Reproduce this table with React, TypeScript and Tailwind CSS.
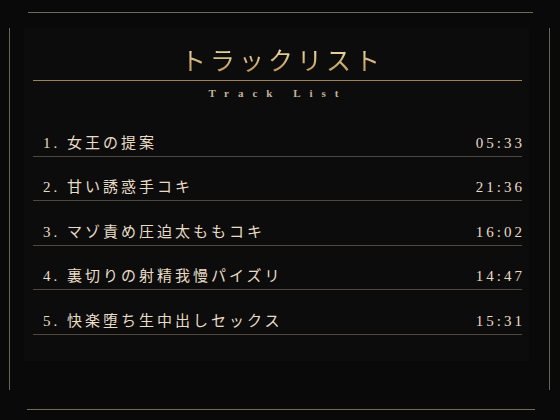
import React from 'react';

interface Track {
  title: string;
  time: string;
}

const tracks: Track[] = [
  { title: '女王の提案', time: '05:33' },
  { title: '甘い誘惑手コキ', time: '21:36' },
  { title: 'マゾ責め圧迫太ももコキ', time: '16:02' },
  { title: '裏切りの射精我慢パイズリ', time: '14:47' },
  { title: '快楽堕ち生中出しセックス', time: '15:31' },
];

const serif = { fontFamily: '"Liberation Serif", "Noto Sans CJK JP", serif' };

export default function App() {
  return (
    <div className="w-[560px] h-[420px] bg-[#0a0909] flex flex-col overflow-hidden" style={serif}>
      {/* top frame line */}
      <div className="h-px mt-[12px] ml-[28px] mr-[27px] bg-[#74685a]" />

      <div className="flex mt-[15px] h-[362px]">
        <div className="w-px ml-[9px] bg-[#6a635a]" />

        <div className="flex-1 pl-[14px] pr-[20px]">
          <div className="h-[333px] bg-[#0d0c0c] pl-[9px] pr-[7px] flex flex-col">
            {/* heading */}
            <div className="pt-[16px] flex justify-center">
              <h1
                className="text-[25px] leading-[30px] font-normal tracking-[4px] pl-[10px] bg-gradient-to-b from-[#f8e7bb] to-[#b8924f] bg-clip-text text-transparent"
                style={{ fontFamily: '"Noto Sans CJK JP", sans-serif' }}
              >
                トラックリスト
              </h1>
            </div>
            <div className="h-px mt-[6px] bg-[#9c8258]" />
            <div className="mt-[5px] text-center text-[11px] leading-[14px] tracking-[9px] pl-[1px] text-[#c2b49c] font-bold">
              Track List
            </div>

            {/* tracks */}
            <div className="mt-[12px] flex flex-col">
              {tracks.map((t, i) => (
                <div
                  key={i}
                  className="h-[44.5px] flex items-end justify-between pb-[3px] pl-[10px] border-b border-[#4d4740]"
                >
                  <span className="text-[15px] leading-[20px] tracking-[3px] text-[#e8dcc6]">
                    {i + 1}.{' '}
                    <span style={{ fontFamily: '"Noto Sans CJK JP", sans-serif' }}>{t.title}</span>
                  </span>
                  <span className="text-[15px] leading-[20px] tracking-[3px] mr-[-3px] text-[#e8dcc6]">
                    {t.time}
                  </span>
                </div>
              ))}
            </div>
          </div>
        </div>

        <div className="w-px mr-[10px] bg-[#6a635a]" />
      </div>

      {/* bottom frame line */}
      <div className="h-px mt-[19px] ml-[27px] mr-[25px] bg-[#74685a]" />
    </div>
  );
}
